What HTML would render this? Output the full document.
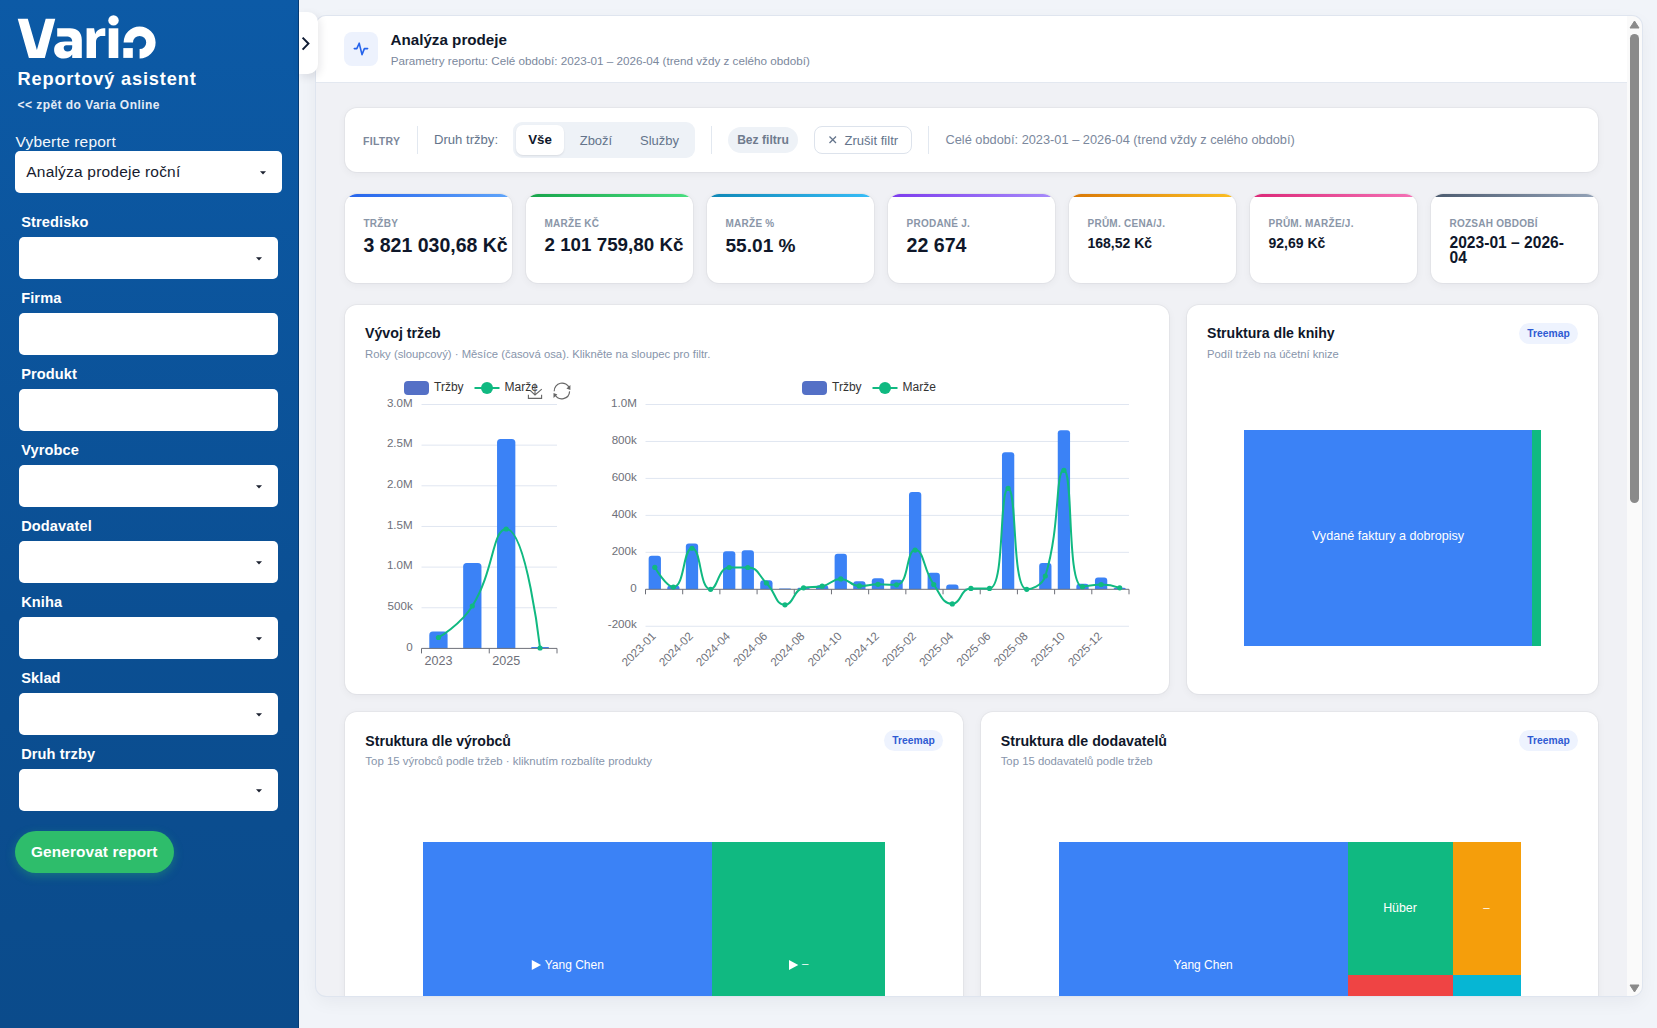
<!DOCTYPE html>
<html><head><meta charset="utf-8"><title>Analýza prodeje</title>
<style>
html,body{margin:0;padding:0;}
body{width:1657px;height:1028px;position:relative;overflow:hidden;font-family:"Liberation Sans", sans-serif;background:#f1f4f9;}
.t{position:absolute;white-space:nowrap;line-height:1;}
.r{position:absolute;}
svg text{font-family:"Liberation Sans", sans-serif;}
</style></head><body>
<div class="r" style="left:0.00px;top:0.00px;width:299.00px;height:1028.00px;background:linear-gradient(180deg,#0c5aa6 0%,#0b4f93 60%,#0b4b8b 100%);"></div><div class="r" style="left:298.00px;top:0.00px;width:1.00px;height:1028.00px;background:#063b74;"></div><svg class="r" style="left:0;top:0" width="200" height="70" viewBox="0 0 200 70">
<g fill="#fff">
<path d="M17.7,18.7 H27.8 L36.9,49.9 L45.7,18.7 H55.3 L44.8,57.9 H28.9 Z"/>
<path fill-rule="evenodd" d="M57.2,28.2 H70 C77.5,28.2 81.8,32.3 81.8,40 V57.9 H72.2 V54.4 C70.6,57 67.5,58.5 63.8,58.5 C58.1,58.5 54.1,54.8 54.1,49.9 C54.1,44.6 58.2,41.6 65,41.6 H72.2 C72.2,38.3 70.2,36.4 66.2,36.4 H57.2 Z M72.2,45.3 H66.4 C64.5,45.3 63.7,46.4 63.7,48.1 C63.7,50 65.1,51.6 67.5,51.6 C70.3,51.6 72.2,49.8 72.2,47.2 Z"/>
<path d="M86.6,57.9 V28.3 H94.1 L95.2,34.2 C96.6,30.3 100,28.3 105.3,28.3 V36.1 H101.8 C98.3,36.1 96,38.6 96,42.2 V57.9 Z"/>
<circle cx="113.5" cy="20.4" r="5.2"/>
<rect x="108.7" y="28.3" width="9.6" height="29.7"/>
<rect x="123.3" y="48.1" width="9.5" height="9.8"/>
<path d="M123.6,42.5 A16,16 0 1 1 139.6,58.5 V49.1 A6.6,6.6 0 1 0 133,42.5 Z"/>
</g></svg><div class="t" style="left:17.50px;top:69.89px;font-size:18.2px;font-weight:bold;color:#fff;letter-spacing:0.85px;">Reportový asistent</div><div class="t" style="left:17.50px;top:98.54px;font-size:12px;font-weight:bold;color:#e3ebf6;letter-spacing:0.45px;">&lt;&lt; zpět do Varia Online</div><div class="t" style="left:15.50px;top:133.98px;font-size:15.5px;font-weight:normal;color:#f4f7fb;letter-spacing:0.2px;">Vyberte report</div><div class="r" style="left:15.00px;top:151.00px;width:267.00px;height:42.00px;background:#fff;border-radius:5px;"></div><div class="t" style="left:26.30px;top:164.38px;font-size:15.5px;font-weight:normal;color:#161b2e;letter-spacing:0.2px;">Analýza prodeje roční</div><svg class="r" style="left:259.2px;top:169.7px" width="8" height="6"><path d="M1,1.2 H7 L4,4.6 Z" fill="#1c2230"/></svg><div class="t" style="left:21.20px;top:214.94px;font-size:14.6px;font-weight:bold;color:#fff;letter-spacing:0.1px;">Stredisko</div><div class="r" style="left:19.00px;top:237.00px;width:259.00px;height:42.00px;background:#fff;border-radius:5px;"></div><svg class="r" style="left:255.0px;top:255.7px" width="8" height="6"><path d="M1,1.2 H7 L4,4.6 Z" fill="#1c2230"/></svg><div class="t" style="left:21.20px;top:290.94px;font-size:14.6px;font-weight:bold;color:#fff;letter-spacing:0.1px;">Firma</div><div class="r" style="left:19.00px;top:313.00px;width:259.00px;height:42.00px;background:#fff;border-radius:5px;"></div><div class="t" style="left:21.20px;top:366.94px;font-size:14.6px;font-weight:bold;color:#fff;letter-spacing:0.1px;">Produkt</div><div class="r" style="left:19.00px;top:389.00px;width:259.00px;height:42.00px;background:#fff;border-radius:5px;"></div><div class="t" style="left:21.20px;top:442.94px;font-size:14.6px;font-weight:bold;color:#fff;letter-spacing:0.1px;">Vyrobce</div><div class="r" style="left:19.00px;top:465.00px;width:259.00px;height:42.00px;background:#fff;border-radius:5px;"></div><svg class="r" style="left:255.0px;top:483.7px" width="8" height="6"><path d="M1,1.2 H7 L4,4.6 Z" fill="#1c2230"/></svg><div class="t" style="left:21.20px;top:518.94px;font-size:14.6px;font-weight:bold;color:#fff;letter-spacing:0.1px;">Dodavatel</div><div class="r" style="left:19.00px;top:541.00px;width:259.00px;height:42.00px;background:#fff;border-radius:5px;"></div><svg class="r" style="left:255.0px;top:559.7px" width="8" height="6"><path d="M1,1.2 H7 L4,4.6 Z" fill="#1c2230"/></svg><div class="t" style="left:21.20px;top:594.94px;font-size:14.6px;font-weight:bold;color:#fff;letter-spacing:0.1px;">Kniha</div><div class="r" style="left:19.00px;top:617.00px;width:259.00px;height:42.00px;background:#fff;border-radius:5px;"></div><svg class="r" style="left:255.0px;top:635.7px" width="8" height="6"><path d="M1,1.2 H7 L4,4.6 Z" fill="#1c2230"/></svg><div class="t" style="left:21.20px;top:670.94px;font-size:14.6px;font-weight:bold;color:#fff;letter-spacing:0.1px;">Sklad</div><div class="r" style="left:19.00px;top:693.00px;width:259.00px;height:42.00px;background:#fff;border-radius:5px;"></div><svg class="r" style="left:255.0px;top:711.7px" width="8" height="6"><path d="M1,1.2 H7 L4,4.6 Z" fill="#1c2230"/></svg><div class="t" style="left:21.20px;top:746.94px;font-size:14.6px;font-weight:bold;color:#fff;letter-spacing:0.1px;">Druh trzby</div><div class="r" style="left:19.00px;top:769.00px;width:259.00px;height:42.00px;background:#fff;border-radius:5px;"></div><svg class="r" style="left:255.0px;top:787.7px" width="8" height="6"><path d="M1,1.2 H7 L4,4.6 Z" fill="#1c2230"/></svg><div class="r" style="left:15.00px;top:831.00px;width:159.00px;height:42.00px;background:#2ebd6b;border-radius:21px;box-shadow:0 3px 10px rgba(46,189,107,.35);"></div><div class="t" style="left:31.00px;top:843.96px;font-size:15.4px;font-weight:bold;color:#fff;letter-spacing:0.1px;">Generovat report</div><div class="r" style="left:316px;top:16px;width:1326px;height:980px;border-radius:10px;overflow:hidden;background:#f0f1f5;box-shadow:0 0 0 1px #dfe5ef,0 6px 18px rgba(15,23,42,.05);"><div class="r" style="left:-316px;top:-16px;width:1657px;height:1028px;"><div class="r" style="left:316.00px;top:16.00px;width:1311.00px;height:67.00px;background:#fff;border-bottom:1px solid #e3e8f0;box-sizing:border-box;"></div><div class="r" style="left:344.00px;top:32.00px;width:34.00px;height:34.00px;background:#edf2fd;border-radius:8px;"></div><svg class="r" style="left:344px;top:32px" width="34" height="34"><path d="M10.3,16.6 H12.8 L15.2,11.2 L18,22.6 L20.4,16.6 H23.6" fill="none" stroke="#2563eb" stroke-width="1.6" stroke-linejoin="round" stroke-linecap="round"/></svg><div class="t" style="left:390.50px;top:31.73px;font-size:15.2px;font-weight:bold;color:#0f172a;">Analýza prodeje</div><div class="t" style="left:390.70px;top:55.11px;font-size:11.68px;font-weight:normal;color:#7b889d;">Parametry reportu: Celé období: 2023-01 – 2026-04 (trend vždy z celého období)</div><div class="r" style="left:345.00px;top:108.00px;width:1253.00px;height:64.00px;background:#fff;border-radius:12px;box-shadow:0 0 0 1px rgba(15,23,42,.035),0 2px 8px rgba(15,23,42,.05);"></div><div class="t" style="left:363.00px;top:135.71px;font-size:10.5px;font-weight:bold;color:#7d889b;letter-spacing:0.3px;">FILTRY</div><div class="r" style="left:417.00px;top:126.00px;width:1.00px;height:28.00px;background:#e2e8f0;"></div><div class="t" style="left:434.00px;top:133.11px;font-size:13.1px;font-weight:normal;color:#64748b;">Druh tržby:</div><div class="r" style="left:513.00px;top:122.00px;width:182.00px;height:36.00px;background:#eef2f7;border-radius:9px;"></div><div class="r" style="left:516.00px;top:125.00px;width:48.00px;height:30.00px;background:#fff;border-radius:7px;box-shadow:0 1px 2px rgba(15,23,42,.10);"></div><div class="t" style="left:540.00px;top:132.54px;font-size:13.3px;font-weight:bold;color:#0f172a;transform:translateX(-50%);">Vše</div><div class="t" style="left:579.70px;top:133.60px;font-size:13px;font-weight:normal;color:#64748b;">Zboží</div><div class="t" style="left:640.00px;top:133.60px;font-size:13px;font-weight:normal;color:#64748b;">Služby</div><div class="r" style="left:711.00px;top:126.00px;width:1.00px;height:28.00px;background:#e2e8f0;"></div><div class="r" style="left:728.00px;top:127.00px;width:70.00px;height:26.00px;background:#eef2f7;border-radius:13px;"></div><div class="t" style="left:763.00px;top:134.36px;font-size:12.1px;font-weight:bold;color:#6f7b8e;transform:translateX(-50%);">Bez filtru</div><div class="r" style="left:814.00px;top:126.00px;width:98.00px;height:28.00px;background:#fff;border:1px solid #dde3ec;border-radius:8px;box-sizing:border-box;"></div><svg class="r" style="left:827px;top:134px" width="12" height="12"><path d="M2.5,2.5 L9,9 M9,2.5 L2.5,9" stroke="#64748b" stroke-width="1.3"/></svg><div class="t" style="left:844.50px;top:133.55px;font-size:13.05px;font-weight:normal;color:#64748b;">Zrušit filtr</div><div class="r" style="left:928.00px;top:126.00px;width:1.00px;height:28.00px;background:#e2e8f0;"></div><div class="t" style="left:945.50px;top:133.76px;font-size:12.8px;font-weight:normal;color:#7b889d;">Celé období: 2023-01 – 2026-04 (trend vždy z celého období)</div><div class="r" style="left:345px;top:194px;width:167px;height:89px;background:#fff;border-radius:12px;overflow:hidden;box-shadow:0 0 0 1px rgba(15,23,42,.035),0 2px 8px rgba(15,23,42,.05);"><div style="position:absolute;left:0;top:0;width:167px;height:3px;background:linear-gradient(90deg,#2563eb,#60a5fa);"></div></div><div class="t" style="left:363.50px;top:218.73px;font-size:10px;font-weight:bold;color:#8a96a8;letter-spacing:0.25px;">TRŽBY</div><div class="t" style="left:363.50px;top:235.89px;font-size:19.5px;font-weight:bold;color:#0f172a;">3 821 030,68 Kč</div><div class="r" style="left:526px;top:194px;width:167px;height:89px;background:#fff;border-radius:12px;overflow:hidden;box-shadow:0 0 0 1px rgba(15,23,42,.035),0 2px 8px rgba(15,23,42,.05);"><div style="position:absolute;left:0;top:0;width:167px;height:3px;background:linear-gradient(90deg,#16a34a,#4ade80);"></div></div><div class="t" style="left:544.50px;top:218.73px;font-size:10px;font-weight:bold;color:#8a96a8;letter-spacing:0.25px;">MARŽE KČ</div><div class="t" style="left:544.50px;top:236.49px;font-size:18.8px;font-weight:bold;color:#0f172a;">2 101 759,80 Kč</div><div class="r" style="left:707px;top:194px;width:167px;height:89px;background:#fff;border-radius:12px;overflow:hidden;box-shadow:0 0 0 1px rgba(15,23,42,.035),0 2px 8px rgba(15,23,42,.05);"><div style="position:absolute;left:0;top:0;width:167px;height:3px;background:linear-gradient(90deg,#0e87b5,#38bdf8);"></div></div><div class="t" style="left:725.50px;top:218.73px;font-size:10px;font-weight:bold;color:#8a96a8;letter-spacing:0.25px;">MARŽE %</div><div class="t" style="left:725.50px;top:236.23px;font-size:19.1px;font-weight:bold;color:#0f172a;">55.01 %</div><div class="r" style="left:888px;top:194px;width:167px;height:89px;background:#fff;border-radius:12px;overflow:hidden;box-shadow:0 0 0 1px rgba(15,23,42,.035),0 2px 8px rgba(15,23,42,.05);"><div style="position:absolute;left:0;top:0;width:167px;height:3px;background:linear-gradient(90deg,#7c3aed,#a78bfa);"></div></div><div class="t" style="left:906.50px;top:218.73px;font-size:10px;font-weight:bold;color:#8a96a8;letter-spacing:0.25px;">PRODANÉ J.</div><div class="t" style="left:906.50px;top:235.81px;font-size:19.6px;font-weight:bold;color:#0f172a;">22 674</div><div class="r" style="left:1069px;top:194px;width:167px;height:89px;background:#fff;border-radius:12px;overflow:hidden;box-shadow:0 0 0 1px rgba(15,23,42,.035),0 2px 8px rgba(15,23,42,.05);"><div style="position:absolute;left:0;top:0;width:167px;height:3px;background:linear-gradient(90deg,#d97706,#fbbf24);"></div></div><div class="t" style="left:1087.50px;top:218.73px;font-size:10px;font-weight:bold;color:#8a96a8;letter-spacing:0.25px;">PRŮM. CENA/J.</div><div class="t" style="left:1087.50px;top:236.05px;font-size:14px;font-weight:bold;color:#0f172a;">168,52 Kč</div><div class="r" style="left:1250px;top:194px;width:167px;height:89px;background:#fff;border-radius:12px;overflow:hidden;box-shadow:0 0 0 1px rgba(15,23,42,.035),0 2px 8px rgba(15,23,42,.05);"><div style="position:absolute;left:0;top:0;width:167px;height:3px;background:linear-gradient(90deg,#db2777,#f472b6);"></div></div><div class="t" style="left:1268.50px;top:218.73px;font-size:10px;font-weight:bold;color:#8a96a8;letter-spacing:0.25px;">PRŮM. MARŽE/J.</div><div class="t" style="left:1268.50px;top:236.05px;font-size:14px;font-weight:bold;color:#0f172a;">92,69 Kč</div><div class="r" style="left:1431px;top:194px;width:167px;height:89px;background:#fff;border-radius:12px;overflow:hidden;box-shadow:0 0 0 1px rgba(15,23,42,.035),0 2px 8px rgba(15,23,42,.05);"><div style="position:absolute;left:0;top:0;width:167px;height:3px;background:linear-gradient(90deg,#4b5a6e,#94a3b8);"></div></div><div class="t" style="left:1449.50px;top:218.73px;font-size:10px;font-weight:bold;color:#8a96a8;letter-spacing:0.25px;">ROZSAH OBDOBÍ</div><div class="t" style="left:1449.50px;top:234.69px;font-size:15.6px;font-weight:bold;color:#0f172a;">2023-01 – 2026-</div><div class="t" style="left:1449.50px;top:250.29px;font-size:15.6px;font-weight:bold;color:#0f172a;">04</div><div class="r" style="left:345.00px;top:305.00px;width:824.00px;height:389.00px;background:#fff;border-radius:12px;box-shadow:0 0 0 1px rgba(15,23,42,.035),0 2px 8px rgba(15,23,42,.05);"></div><div class="t" style="left:365.00px;top:325.98px;font-size:14.2px;font-weight:bold;color:#0f172a;">Vývoj tržeb</div><div class="t" style="left:365.00px;top:348.93px;font-size:11.3px;font-weight:normal;color:#8795ab;">Roky (sloupcový) · Měsíce (časová osa). Klikněte na sloupec pro filtr.</div><svg class="r" style="left:0;top:0" width="1657" height="1028" font-family='"Liberation Sans", sans-serif'><text x="412.7" y="650.60" font-size="11.6" fill="#6e7079" text-anchor="end">0</text><path d="M421.5,607.75 H557.0" stroke="#e0e6f1" stroke-width="1"/><text x="412.7" y="609.95" font-size="11.6" fill="#6e7079" text-anchor="end">500k</text><path d="M421.5,567.10 H557.0" stroke="#e0e6f1" stroke-width="1"/><text x="412.7" y="569.30" font-size="11.6" fill="#6e7079" text-anchor="end">1.0M</text><path d="M421.5,526.45 H557.0" stroke="#e0e6f1" stroke-width="1"/><text x="412.7" y="528.65" font-size="11.6" fill="#6e7079" text-anchor="end">1.5M</text><path d="M421.5,485.80 H557.0" stroke="#e0e6f1" stroke-width="1"/><text x="412.7" y="488.00" font-size="11.6" fill="#6e7079" text-anchor="end">2.0M</text><path d="M421.5,445.15 H557.0" stroke="#e0e6f1" stroke-width="1"/><text x="412.7" y="447.35" font-size="11.6" fill="#6e7079" text-anchor="end">2.5M</text><path d="M421.5,404.50 H557.0" stroke="#e0e6f1" stroke-width="1"/><text x="412.7" y="406.70" font-size="11.6" fill="#6e7079" text-anchor="end">3.0M</text><path d="M429.29,648.40 V635.00 Q429.29,631.50 432.79,631.50 H444.09 Q447.59,631.50 447.59,635.00 V648.40 Z" fill="#3b82f6"/><path d="M463.16,648.40 V566.50 Q463.16,563.00 466.66,563.00 H477.96 Q481.46,563.00 481.46,566.50 V648.40 Z" fill="#3b82f6"/><path d="M497.04,648.40 V442.50 Q497.04,439.00 500.54,439.00 H511.84 Q515.34,439.00 515.34,442.50 V648.40 Z" fill="#3b82f6"/><path d="M530.91,648.40 V648.40 Q530.91,647.00 532.31,647.00 H547.81 Q549.21,647.00 549.21,648.40 V648.40 Z" fill="#3b82f6"/><path d="M421.5,648.4 H557.0" stroke="#6e7079" stroke-width="1"/><path d="M421.50,648.4 V653.4" stroke="#6e7079" stroke-width="1"/><path d="M489.25,648.4 V653.4" stroke="#6e7079" stroke-width="1"/><path d="M557.00,648.4 V653.4" stroke="#6e7079" stroke-width="1"/><text x="438.44" y="664.8" font-size="12.6" fill="#6e7079" text-anchor="middle">2023</text><text x="506.19" y="664.8" font-size="12.6" fill="#6e7079" text-anchor="middle">2025</text><path d="M438.44,637.50 C438.44,637.50 460.29,625.25 472.31,606.00 C494.17,571.00 492.48,529.00 506.19,529.00 C526.35,529.00 540.06,648.00 540.06,648.00" fill="none" stroke="#10b981" stroke-width="2"/><circle cx="438.44" cy="637.50" r="2.6" fill="#10b981"/><circle cx="472.31" cy="606.00" r="2.6" fill="#10b981"/><circle cx="506.19" cy="529.00" r="2.6" fill="#10b981"/><circle cx="540.06" cy="648.00" r="2.6" fill="#10b981"/><rect x="404" y="381" width="25" height="14" rx="4" fill="#5470c6"/><text x="434" y="391.2" font-size="12" fill="#333">Tržby</text><path d="M474.5,388 H499.5" stroke="#10b981" stroke-width="2"/><circle cx="487.0" cy="388" r="6" fill="#10b981"/><text x="504.5" y="391.2" font-size="12" fill="#333">Marže</text><g fill="none" stroke="#666" stroke-width="1.1"><path d="M528.4,394.8 V398.4 H541.6 V394.8"/><path d="M535,383.5 V394.8 M530.1,390.4 L535,394.9 L541.8,389.2"/></g><g fill="none" stroke="#666" stroke-width="1.15"><path d="M554.2,391.2 A7.8,7.8 0 0 1 569.3,388.2 M569.6,391.4 A7.8,7.8 0 0 1 554.9,394.6"/></g><g fill="#666"><path d="M566.4,388.4 L570.4,384.9 L570.4,389.9 Z M557.4,394.6 L553.5,398 L553.5,393.1 Z"/></g><path d="M645.5,626.26 H1129.0" stroke="#e0e6f1" stroke-width="1"/><text x="636.8" y="628.46" font-size="11.6" fill="#6e7079" text-anchor="end">-200k</text><text x="636.8" y="591.50" font-size="11.6" fill="#6e7079" text-anchor="end">0</text><path d="M645.5,552.34 H1129.0" stroke="#e0e6f1" stroke-width="1"/><text x="636.8" y="554.54" font-size="11.6" fill="#6e7079" text-anchor="end">200k</text><path d="M645.5,515.38 H1129.0" stroke="#e0e6f1" stroke-width="1"/><text x="636.8" y="517.58" font-size="11.6" fill="#6e7079" text-anchor="end">400k</text><path d="M645.5,478.42 H1129.0" stroke="#e0e6f1" stroke-width="1"/><text x="636.8" y="480.62" font-size="11.6" fill="#6e7079" text-anchor="end">600k</text><path d="M645.5,441.46 H1129.0" stroke="#e0e6f1" stroke-width="1"/><text x="636.8" y="443.66" font-size="11.6" fill="#6e7079" text-anchor="end">800k</text><path d="M645.5,404.50 H1129.0" stroke="#e0e6f1" stroke-width="1"/><text x="636.8" y="406.70" font-size="11.6" fill="#6e7079" text-anchor="end">1.0M</text><path d="M648.65,589.30 V558.85 Q648.65,555.85 651.65,555.85 H657.95 Q660.95,555.85 660.95,558.85 V589.30 Z" fill="#3b82f6"/><path d="M667.24,589.30 V588.60 Q667.24,585.60 670.24,585.60 H676.54 Q679.54,585.60 679.54,588.60 V589.30 Z" fill="#3b82f6"/><path d="M685.84,589.30 V546.47 Q685.84,543.47 688.84,543.47 H695.14 Q698.14,543.47 698.14,546.47 V589.30 Z" fill="#3b82f6"/><path d="M723.03,589.30 V554.23 Q723.03,551.23 726.03,551.23 H732.33 Q735.33,551.23 735.33,554.23 V589.30 Z" fill="#3b82f6"/><path d="M741.63,589.30 V553.31 Q741.63,550.31 744.63,550.31 H750.93 Q753.93,550.31 753.93,553.31 V589.30 Z" fill="#3b82f6"/><path d="M760.23,589.30 V583.24 Q760.23,580.24 763.23,580.24 H769.52 Q772.52,580.24 772.52,583.24 V589.30 Z" fill="#3b82f6"/><path d="M778.82,589.30 V589.30 Q778.82,588.38 779.75,588.38 H790.20 Q791.12,588.38 791.12,589.30 V589.30 Z" fill="#3b82f6"/><path d="M797.42,589.30 V589.30 Q797.42,587.82 798.90,587.82 H808.24 Q809.72,587.82 809.72,589.30 V589.30 Z" fill="#3b82f6"/><path d="M816.01,589.30 V588.23 Q816.01,585.23 819.01,585.23 H825.31 Q828.31,585.23 828.31,588.23 V589.30 Z" fill="#3b82f6"/><path d="M834.61,589.30 V556.63 Q834.61,553.63 837.61,553.63 H843.91 Q846.91,553.63 846.91,556.63 V589.30 Z" fill="#3b82f6"/><path d="M853.21,589.30 V584.17 Q853.21,581.17 856.21,581.17 H862.51 Q865.51,581.17 865.51,584.17 V589.30 Z" fill="#3b82f6"/><path d="M871.80,589.30 V581.21 Q871.80,578.21 874.80,578.21 H881.10 Q884.10,578.21 884.10,581.21 V589.30 Z" fill="#3b82f6"/><path d="M890.40,589.30 V582.69 Q890.40,579.69 893.40,579.69 H899.70 Q902.70,579.69 902.70,582.69 V589.30 Z" fill="#3b82f6"/><path d="M908.99,589.30 V495.10 Q908.99,492.10 911.99,492.10 H918.29 Q921.29,492.10 921.29,495.10 V589.30 Z" fill="#3b82f6"/><path d="M927.59,589.30 V575.85 Q927.59,572.85 930.59,572.85 H936.89 Q939.89,572.85 939.89,575.85 V589.30 Z" fill="#3b82f6"/><path d="M946.19,589.30 V587.50 Q946.19,584.50 949.19,584.50 H955.49 Q958.49,584.50 958.49,587.50 V589.30 Z" fill="#3b82f6"/><path d="M964.78,589.30 V589.30 Q964.78,588.75 965.34,588.75 H976.53 Q977.08,588.75 977.08,589.30 V589.30 Z" fill="#3b82f6"/><path d="M983.38,589.30 V589.30 Q983.38,588.93 983.75,588.93 H995.31 Q995.68,588.93 995.68,589.30 V589.30 Z" fill="#3b82f6"/><path d="M1001.98,589.30 V455.18 Q1001.98,452.18 1004.98,452.18 H1011.27 Q1014.27,452.18 1014.27,455.18 V589.30 Z" fill="#3b82f6"/><path d="M1020.57,589.30 V589.30 Q1020.57,588.93 1020.94,588.93 H1032.50 Q1032.87,588.93 1032.87,589.30 V589.30 Z" fill="#3b82f6"/><path d="M1039.17,589.30 V566.06 Q1039.17,563.06 1042.17,563.06 H1048.47 Q1051.47,563.06 1051.47,566.06 V589.30 Z" fill="#3b82f6"/><path d="M1057.76,589.30 V433.37 Q1057.76,430.37 1060.76,430.37 H1067.06 Q1070.06,430.37 1070.06,433.37 V589.30 Z" fill="#3b82f6"/><path d="M1076.36,589.30 V586.76 Q1076.36,583.76 1079.36,583.76 H1085.66 Q1088.66,583.76 1088.66,586.76 V589.30 Z" fill="#3b82f6"/><path d="M1094.96,589.30 V580.47 Q1094.96,577.47 1097.96,577.47 H1104.26 Q1107.26,577.47 1107.26,580.47 V589.30 Z" fill="#3b82f6"/><path d="M1113.55,589.30 V589.30 Q1113.55,587.64 1115.22,587.64 H1124.19 Q1125.85,587.64 1125.85,589.30 V589.30 Z" fill="#3b82f6"/><path d="M645.5,589.3 H1129.0" stroke="#6e7079" stroke-width="1"/><path d="M645.50,589.3 V594.3" stroke="#6e7079" stroke-width="1"/><path d="M682.69,589.3 V594.3" stroke="#6e7079" stroke-width="1"/><path d="M719.88,589.3 V594.3" stroke="#6e7079" stroke-width="1"/><path d="M757.08,589.3 V594.3" stroke="#6e7079" stroke-width="1"/><path d="M794.27,589.3 V594.3" stroke="#6e7079" stroke-width="1"/><path d="M831.46,589.3 V594.3" stroke="#6e7079" stroke-width="1"/><path d="M868.65,589.3 V594.3" stroke="#6e7079" stroke-width="1"/><path d="M905.85,589.3 V594.3" stroke="#6e7079" stroke-width="1"/><path d="M943.04,589.3 V594.3" stroke="#6e7079" stroke-width="1"/><path d="M980.23,589.3 V594.3" stroke="#6e7079" stroke-width="1"/><path d="M1017.42,589.3 V594.3" stroke="#6e7079" stroke-width="1"/><path d="M1054.62,589.3 V594.3" stroke="#6e7079" stroke-width="1"/><path d="M1091.81,589.3 V594.3" stroke="#6e7079" stroke-width="1"/><path d="M1129.00,589.3 V594.3" stroke="#6e7079" stroke-width="1"/><text transform="translate(650.90,631.3) rotate(-45)" x="0" y="8" font-size="11.6" fill="#6e7079" text-anchor="end">2023-01</text><text transform="translate(688.09,631.3) rotate(-45)" x="0" y="8" font-size="11.6" fill="#6e7079" text-anchor="end">2024-02</text><text transform="translate(725.28,631.3) rotate(-45)" x="0" y="8" font-size="11.6" fill="#6e7079" text-anchor="end">2024-04</text><text transform="translate(762.48,631.3) rotate(-45)" x="0" y="8" font-size="11.6" fill="#6e7079" text-anchor="end">2024-06</text><text transform="translate(799.67,631.3) rotate(-45)" x="0" y="8" font-size="11.6" fill="#6e7079" text-anchor="end">2024-08</text><text transform="translate(836.86,631.3) rotate(-45)" x="0" y="8" font-size="11.6" fill="#6e7079" text-anchor="end">2024-10</text><text transform="translate(874.05,631.3) rotate(-45)" x="0" y="8" font-size="11.6" fill="#6e7079" text-anchor="end">2024-12</text><text transform="translate(911.24,631.3) rotate(-45)" x="0" y="8" font-size="11.6" fill="#6e7079" text-anchor="end">2025-02</text><text transform="translate(948.44,631.3) rotate(-45)" x="0" y="8" font-size="11.6" fill="#6e7079" text-anchor="end">2025-04</text><text transform="translate(985.63,631.3) rotate(-45)" x="0" y="8" font-size="11.6" fill="#6e7079" text-anchor="end">2025-06</text><text transform="translate(1022.82,631.3) rotate(-45)" x="0" y="8" font-size="11.6" fill="#6e7079" text-anchor="end">2025-08</text><text transform="translate(1060.01,631.3) rotate(-45)" x="0" y="8" font-size="11.6" fill="#6e7079" text-anchor="end">2025-10</text><text transform="translate(1097.21,631.3) rotate(-45)" x="0" y="8" font-size="11.6" fill="#6e7079" text-anchor="end">2025-12</text><path d="M654.80,567.31 C654.80,567.31 666.20,587.08 673.39,587.08 C684.80,587.08 682.90,548.27 691.99,548.27 C701.50,548.27 699.22,589.30 710.59,589.30 C717.82,589.30 717.90,567.49 729.18,567.49 C736.50,567.49 739.70,567.49 747.78,567.49 C758.30,567.49 757.86,574.47 766.38,583.02 C776.45,593.13 775.08,604.82 784.97,604.82 C793.67,604.82 792.89,590.07 803.57,587.82 C811.48,586.16 813.17,587.82 822.16,586.16 C831.77,584.38 831.45,578.95 840.76,578.95 C850.04,578.95 849.77,585.97 859.36,585.97 C868.36,585.97 868.64,584.31 877.95,584.31 C887.23,584.31 890.58,584.86 896.55,584.86 C909.18,584.86 905.81,550.12 915.14,550.12 C924.40,550.12 922.72,568.56 933.74,584.50 C941.32,595.45 942.56,603.90 952.34,603.90 C961.15,603.90 960.41,588.38 970.93,588.38 C979.01,588.38 986.65,588.38 989.53,588.38 C1005.25,588.38 998.87,488.40 1008.12,488.40 C1017.46,488.40 1011.51,589.30 1026.72,589.30 C1030.11,589.30 1042.05,586.45 1045.32,575.99 C1060.65,526.94 1055.05,470.29 1063.91,470.29 C1073.65,470.29 1066.46,586.71 1082.51,586.71 C1085.06,586.71 1091.85,584.50 1101.11,584.50 C1110.44,584.50 1119.70,587.82 1119.70,587.82" fill="none" stroke="#10b981" stroke-width="2"/><circle cx="654.80" cy="567.31" r="2.6" fill="#10b981"/><circle cx="673.39" cy="587.08" r="2.6" fill="#10b981"/><circle cx="691.99" cy="548.27" r="2.6" fill="#10b981"/><circle cx="710.59" cy="589.30" r="2.6" fill="#10b981"/><circle cx="729.18" cy="567.49" r="2.6" fill="#10b981"/><circle cx="747.78" cy="567.49" r="2.6" fill="#10b981"/><circle cx="766.38" cy="583.02" r="2.6" fill="#10b981"/><circle cx="784.97" cy="604.82" r="2.6" fill="#10b981"/><circle cx="803.57" cy="587.82" r="2.6" fill="#10b981"/><circle cx="822.16" cy="586.16" r="2.6" fill="#10b981"/><circle cx="840.76" cy="578.95" r="2.6" fill="#10b981"/><circle cx="859.36" cy="585.97" r="2.6" fill="#10b981"/><circle cx="877.95" cy="584.31" r="2.6" fill="#10b981"/><circle cx="896.55" cy="584.86" r="2.6" fill="#10b981"/><circle cx="915.14" cy="550.12" r="2.6" fill="#10b981"/><circle cx="933.74" cy="584.50" r="2.6" fill="#10b981"/><circle cx="952.34" cy="603.90" r="2.6" fill="#10b981"/><circle cx="970.93" cy="588.38" r="2.6" fill="#10b981"/><circle cx="989.53" cy="588.38" r="2.6" fill="#10b981"/><circle cx="1008.12" cy="488.40" r="2.6" fill="#10b981"/><circle cx="1026.72" cy="589.30" r="2.6" fill="#10b981"/><circle cx="1045.32" cy="575.99" r="2.6" fill="#10b981"/><circle cx="1063.91" cy="470.29" r="2.6" fill="#10b981"/><circle cx="1082.51" cy="586.71" r="2.6" fill="#10b981"/><circle cx="1101.11" cy="584.50" r="2.6" fill="#10b981"/><circle cx="1119.70" cy="587.82" r="2.6" fill="#10b981"/><rect x="802" y="381" width="25" height="14" rx="4" fill="#5470c6"/><text x="832" y="391.2" font-size="12" fill="#333">Tržby</text><path d="M872.5,388 H897.5" stroke="#10b981" stroke-width="2"/><circle cx="885.0" cy="388" r="6" fill="#10b981"/><text x="902.5" y="391.2" font-size="12" fill="#333">Marže</text></svg><div class="r" style="left:1187.00px;top:305.00px;width:411.00px;height:389.00px;background:#fff;border-radius:12px;box-shadow:0 0 0 1px rgba(15,23,42,.035),0 2px 8px rgba(15,23,42,.05);"></div><div class="t" style="left:1207.00px;top:325.86px;font-size:14.1px;font-weight:bold;color:#0f172a;">Struktura dle knihy</div><div class="t" style="left:1207.00px;top:348.52px;font-size:11.2px;font-weight:normal;color:#8795ab;">Podíl tržeb na účetní knize</div><div class="r" style="left:1519.00px;top:323.00px;width:59.00px;height:21.00px;background:#eef3fe;border-radius:11px;"></div><div class="t" style="left:1548.50px;top:328.78px;font-size:10.3px;font-weight:bold;color:#2f5bd3;transform:translateX(-50%);">Treemap</div><div class="r" style="left:1244.00px;top:430.00px;width:288.00px;height:216.00px;background:#3b82f6;"></div><div class="r" style="left:1532.00px;top:430.00px;width:9.00px;height:216.00px;background:#10b981;"></div><div class="t" style="left:1388.00px;top:530.33px;font-size:12.6px;font-weight:normal;color:#fff;transform:translateX(-50%);">Vydané faktury a dobropisy</div><div class="r" style="left:345.00px;top:712.00px;width:618.00px;height:388.00px;background:#fff;border-radius:12px;box-shadow:0 0 0 1px rgba(15,23,42,.035),0 2px 8px rgba(15,23,42,.05);"></div><div class="t" style="left:365.30px;top:733.86px;font-size:14.1px;font-weight:bold;color:#0f172a;">Struktura dle výrobců</div><div class="t" style="left:365.30px;top:755.81px;font-size:11.45px;font-weight:normal;color:#8795ab;">Top 15 výrobců podle tržeb · kliknutím rozbalíte produkty</div><div class="r" style="left:884.00px;top:730.00px;width:59.00px;height:21.00px;background:#eef3fe;border-radius:11px;"></div><div class="t" style="left:913.50px;top:735.78px;font-size:10.3px;font-weight:bold;color:#2f5bd3;transform:translateX(-50%);">Treemap</div><div class="r" style="left:423.00px;top:842.00px;width:289.00px;height:158.00px;background:#3b82f6;"></div><div class="r" style="left:712.00px;top:842.00px;width:173.00px;height:158.00px;background:#10b981;"></div><svg class="r" style="left:0;top:0" width="1657" height="1028"><path d="M531.8,960 L541.1,965 L531.8,970 Z M789,960 L798.3,965 L789,970 Z" fill="#fff"/></svg><div class="t" style="left:544.70px;top:958.94px;font-size:12px;font-weight:normal;color:#fff;">Yang Chen</div><div class="t" style="left:802.00px;top:958.27px;font-size:11.5px;font-weight:normal;color:#fff;">–</div><div class="r" style="left:981.00px;top:712.00px;width:617.00px;height:388.00px;background:#fff;border-radius:12px;box-shadow:0 0 0 1px rgba(15,23,42,.035),0 2px 8px rgba(15,23,42,.05);"></div><div class="t" style="left:1000.70px;top:733.78px;font-size:14.2px;font-weight:bold;color:#0f172a;">Struktura dle dodavatelů</div><div class="t" style="left:1000.70px;top:755.89px;font-size:11.35px;font-weight:normal;color:#8795ab;">Top 15 dodavatelů podle tržeb</div><div class="r" style="left:1519.00px;top:730.00px;width:59.00px;height:21.00px;background:#eef3fe;border-radius:11px;"></div><div class="t" style="left:1548.50px;top:735.78px;font-size:10.3px;font-weight:bold;color:#2f5bd3;transform:translateX(-50%);">Treemap</div><div class="r" style="left:1059.00px;top:842.00px;width:289.00px;height:158.00px;background:#3b82f6;"></div><div class="r" style="left:1348.00px;top:842.00px;width:104.50px;height:133.00px;background:#10b981;"></div><div class="r" style="left:1452.50px;top:842.00px;width:68.50px;height:133.00px;background:#f59e0b;"></div><div class="r" style="left:1348.00px;top:975.00px;width:104.50px;height:25.00px;background:#ef4444;"></div><div class="r" style="left:1452.50px;top:975.00px;width:68.50px;height:25.00px;background:#06b6d4;"></div><div class="t" style="left:1203.20px;top:958.64px;font-size:12px;font-weight:normal;color:#fff;transform:translateX(-50%);">Yang Chen</div><div class="t" style="left:1400.00px;top:901.80px;font-size:12.4px;font-weight:normal;color:#fff;transform:translateX(-50%);">Hüber</div><div class="t" style="left:1486.50px;top:901.57px;font-size:11.5px;font-weight:normal;color:#fff;transform:translateX(-50%);">–</div><div class="r" style="left:1627.00px;top:16.00px;width:15.00px;height:980.00px;background:#fafafa;"></div><div class="r" style="left:1630.00px;top:34.00px;width:9.00px;height:469.00px;background:#8a8a8a;border-radius:4.5px;"></div><svg class="r" style="left:1627px;top:16px" width="15" height="16"><path d="M3,12 H12 L7.5,5 Z" fill="#8a8a8a" stroke="#8a8a8a" stroke-width="1" stroke-linejoin="round"/></svg><svg class="r" style="left:1627px;top:980px" width="15" height="16"><path d="M3,5 H12 L7.5,12 Z" fill="#8a8a8a" stroke="#8a8a8a" stroke-width="1" stroke-linejoin="round"/></svg></div></div><div class="r" style="left:299.00px;top:12.00px;width:19.00px;height:62.00px;background:#fff;border-radius:0 10px 10px 0;box-shadow:2px 3px 8px rgba(15,23,42,.10);"></div><svg class="r" style="left:299px;top:12px" width="19" height="62"><path d="M3.6,25.6 L9.4,31.6 L3.6,37.6" fill="none" stroke="#0f1b33" stroke-width="2"/></svg>
</body></html>
